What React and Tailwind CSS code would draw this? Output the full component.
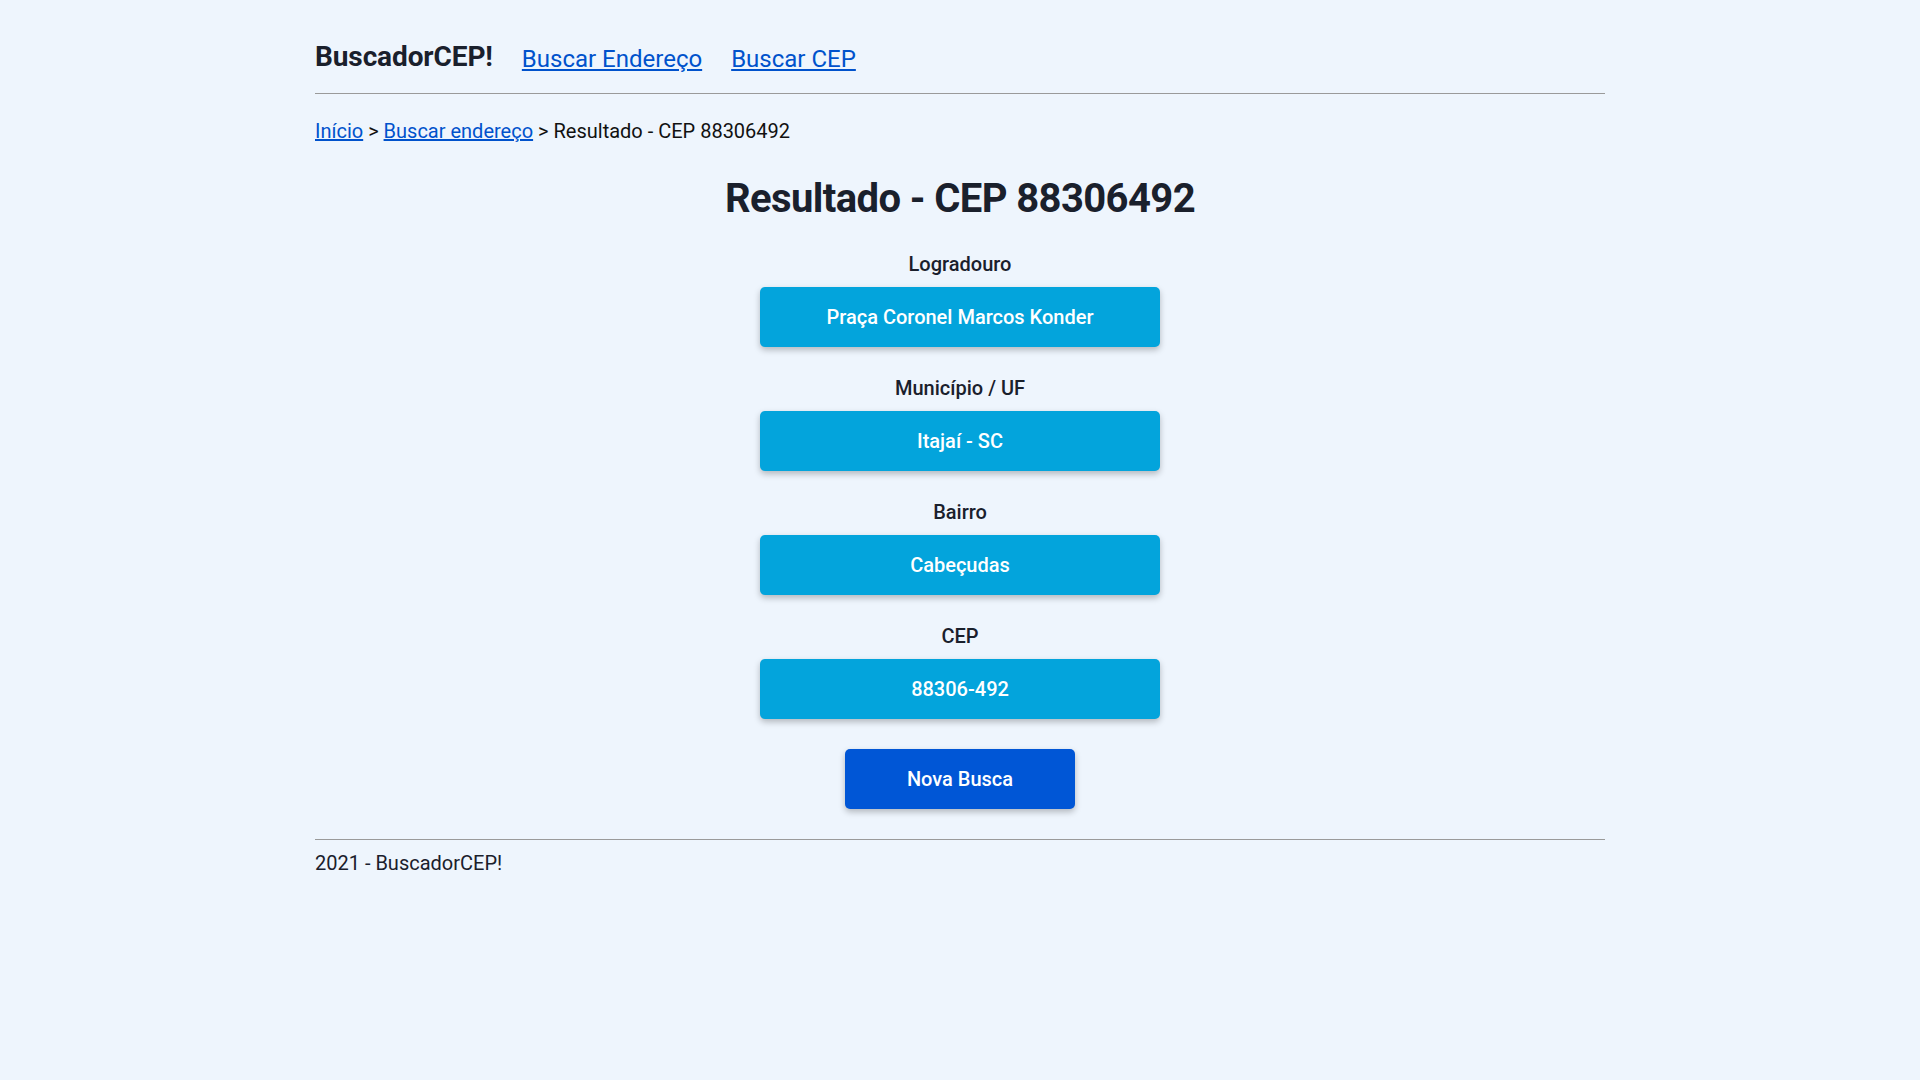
import React from 'react';

const fields = [
  { label: 'Logradouro', value: 'Praça Coronel Marcos Konder' },
  { label: 'Município / UF', value: 'Itajaí - SC' },
  { label: 'Bairro', value: 'Cabeçudas' },
  { label: 'CEP', value: '88306-492' },
];

function Field({ label, value }) {
  return (
    <div className="flex flex-col items-center mb-[29px]">
      <p className="text-[20px] leading-[24px] font-medium text-[#1a202c]">{label}</p>
      <div className="mt-[11px] w-[400px] h-[60px] rounded-[5px] bg-[#03a4dc] shadow-[0_3px_6px_rgba(0,0,0,0.25)] flex items-center justify-center text-white text-[20px] font-medium">
        {value}
      </div>
    </div>
  );
}

export default function App() {
  return (
    <div className="min-h-screen bg-[#eef5fd] text-[#1a202c]" style={{ fontFamily: 'Roboto, "Noto Sans", sans-serif' }}>
      <div className="w-[1290px] mx-auto">
        {/* Header */}
        <header className="flex items-baseline gap-[29px] pt-[39px] pb-[18px] border-b border-[#9a9a9a]">
          <h1 className="text-[28px] leading-[36px] font-bold tracking-[-0.1px] text-[#1a202c]">BuscadorCEP!</h1>
          <a href="#" className="translate-y-[1px] text-[24px] leading-[30px] text-[#0052cc] underline">Buscar Endereço</a>
          <a href="#" className="translate-y-[1px] text-[24px] leading-[30px] text-[#0052cc] underline">Buscar CEP</a>
        </header>

        {/* Breadcrumb */}
        <nav className="mt-[25px] text-[20px] leading-[24px] text-[#111]">
          <a href="#" className="text-[#0052cc] underline">Início</a>
          {' > '}
          <a href="#" className="text-[#0052cc] underline">Buscar endereço</a>
          {' > '}Resultado - CEP 88306492
        </nav>

        <main className="flex flex-col items-center">
          <h2 className="mt-[32px] text-[40px] leading-[48px] font-bold tracking-[-0.6px] text-[#1a202c]">Resultado - CEP 88306492</h2>
          <div className="mt-[29px] flex flex-col items-center">
            {fields.map((f) => (
              <Field key={f.label} label={f.label} value={f.value} />
            ))}
          </div>
          <button className="mt-[1px] w-[230px] h-[60px] rounded-[5px] bg-[#0056d6] shadow-[0_3px_6px_rgba(0,0,0,0.25)] text-white text-[20px] font-medium">
            Nova Busca
          </button>
        </main>

        {/* Footer */}
        <footer className="mt-[30px] border-t border-[#9a9a9a] pt-[11px] text-[20px] leading-[24px] text-[#1a202c]">
          2021 - BuscadorCEP!
        </footer>
      </div>
    </div>
  );
}
